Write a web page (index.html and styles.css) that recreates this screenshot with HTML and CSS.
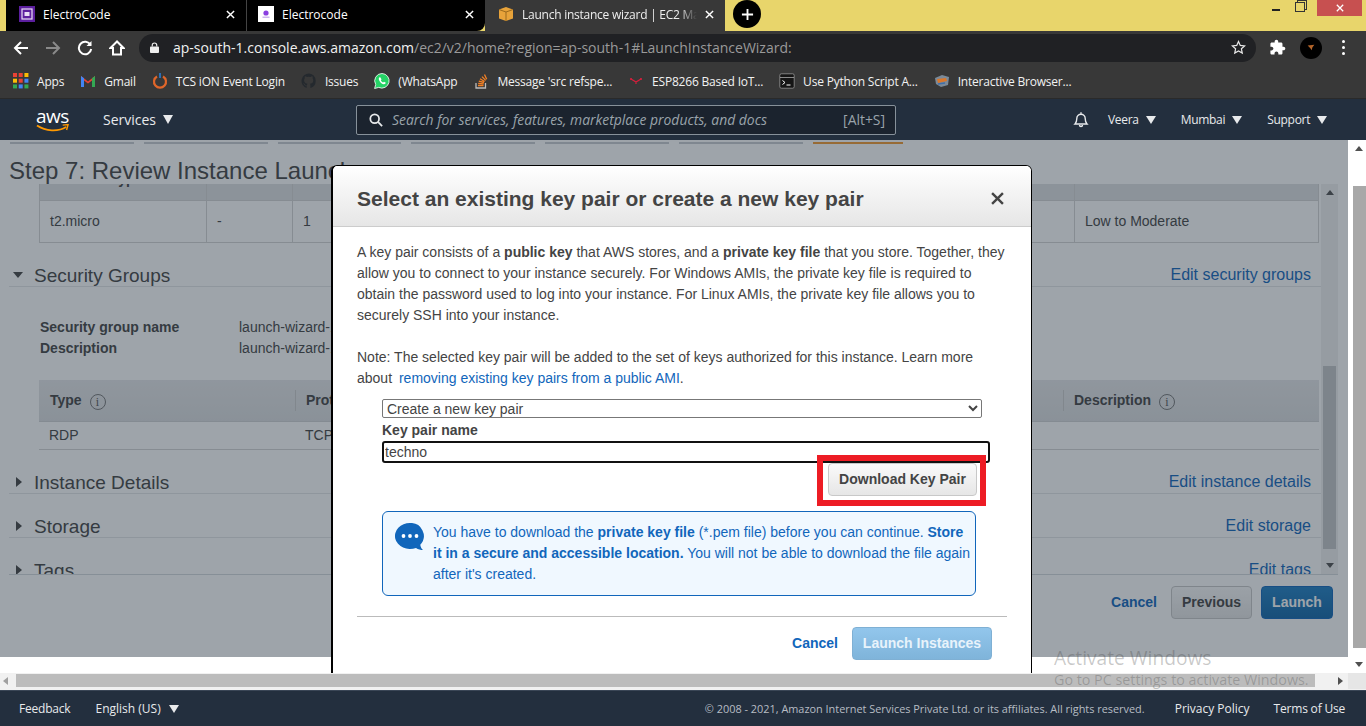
FILE: index.html
```html
<!DOCTYPE html>
<html lang="en">

<head>
  <meta charset="UTF-8">
  <meta name="viewport" content="width=device-width, initial-scale=1.0">
  <title>Launch instance wizard | EC2 Management Console</title>
  <link rel="stylesheet" href="styles.css">
</head>

<body>
  <!-- browser chrome -->
  <div class="tabstrip">
    <div class="tab">
      <svg class="favicon" viewBox="0 0 16 16"><rect width="16" height="16" fill="#5c1f9e"/><rect x="3" y="3" width="10" height="10" fill="none" stroke="#e8dcf5" stroke-width="1.2"/><rect x="5.5" y="6" width="5" height="4" fill="#e8dcf5"/></svg>
      <span class="tab-title">ElectroCode</span>
      <svg class="tab-close" viewBox="0 0 10 10"><path d="M1 1l8 8M9 1l-8 8"/></svg>
    </div>
    <div class="tab tab-second">
      <svg class="favicon" viewBox="0 0 16 16"><rect width="16" height="16" fill="#fff"/><circle cx="8" cy="7" r="2.6" fill="#8a3fe0"/><rect x="4.5" y="10.5" width="7" height="1.5" fill="#cdb5ee"/></svg>
      <span class="tab-title">Electrocode</span>
      <svg class="tab-close" viewBox="0 0 10 10"><path d="M1 1l8 8M9 1l-8 8"/></svg>
    </div>
    <div class="tab tab-active">
      <svg class="favicon" viewBox="0 0 16 16"><path d="M1 3.5L8 1l7 2.5v9L8 15l-7-2.5z" fill="#e8a33a"/><path d="M1 3.5L8 6l7-2.5M8 6v9" fill="none" stroke="#9c6a1c" stroke-width="1"/></svg>
      <span class="tab-title tab-fade">Launch instance wizard | EC2 Management Console</span>
      <svg class="tab-close" viewBox="0 0 10 10"><path d="M1 1l8 8M9 1l-8 8"/></svg>
    </div>
    <div class="newtab">
      <svg viewBox="0 0 14 14"><path d="M7 1v12M1 7h12"/></svg>
    </div>
    <div class="winbtns">
      <span class="win-min"></span>
      <span class="win-restore"></span>
      <span class="win-close"><svg viewBox="0 0 10 10"><path d="M1 1l8 8M9 1l-8 8"/></svg></span>
    </div>
  </div>

  <div class="toolbar">
    <svg class="tool tool-first" viewBox="0 0 16 16"><path d="M15 8H2M8 2L2 8l6 6"/></svg>
    <svg class="tool tool-off" viewBox="0 0 16 16"><path d="M1 8h13M8 2l6 6-6 6"/></svg>
    <svg class="tool" viewBox="0 0 16 16"><path d="M13.5 5A6.2 6.2 0 1 0 14.2 9"/><path class="tool-solid" d="M14.5 1v5h-5z"/></svg>
    <svg class="tool" viewBox="0 0 16 16"><path d="M8 1.5L1.5 8H4v6.5h8V8h2.5z"/></svg>
    <div class="omnibox">
      <svg class="lock" viewBox="0 0 10 12"><rect y="5" width="10" height="7" rx="1"/><path d="M2.5 5V3.5a2.5 2.5 0 0 1 5 0V5" fill="none" stroke="#eee" stroke-width="1.3"/></svg>
      <span class="url"><span class="url-host">ap-south-1.console.aws.amazon.com</span>/ec2/v2/home?region=ap-south-1#LaunchInstanceWizard:</span>
      <svg class="star" viewBox="0 0 16 16"><path d="M8 1.6l1.9 4.2 4.6.5-3.4 3.1.9 4.5L8 11.6l-4 2.3.9-4.5L1.500 6.300l4.600-.5z"/></svg>
    </div>
    <svg class="puzzle" viewBox="0 0 24 24"><path d="M20.500 11H19V7c0-1.100-.9-2-2-2h-4V3.500C13 2.120 11.880 1 10.500 1S8 2.120 8 3.500V5H4c-1.100 0-1.990.9-1.990 2v3.800H3.500c1.490 0 2.700 1.210 2.700 2.700s-1.210 2.700-2.700 2.700H2V20c0 1.100.9 2 2 2h3.800v-1.500c0-1.490 1.210-2.700 2.700-2.700 1.490 0 2.700 1.210 2.700 2.700V22H17c1.100 0 2-.9 2-2v-4h1.500c1.380 0 2.500-1.120 2.500-2.500S21.880 11 20.500 11z"/></svg>
    <div class="avatar"><svg viewBox="0 0 12 10"><path d="M1 2l10-1-3 4-1 4-2-3z" fill="#b5652a"/></svg></div>
    <div class="kebab"><span></span><span></span><span></span></div>
  </div>

  <div class="bookmarks">
    <a class="bm">
      <svg class="bm-icon" viewBox="0 0 14 14"><g fill="#ea4335"><rect width="3.500" height="3.500"/><rect x="5" width="3.500" height="3.500"/></g><rect x="10" width="3.500" height="3.500" fill="#fbbc05"/><g fill="#fbbc05"><rect y="5" width="3.500" height="3.500"/></g><rect x="5" y="5" width="3.500" height="3.500" fill="#ea4335"/><rect x="10" y="5" width="3.500" height="3.500" fill="#4285f4"/><rect y="10" width="3.500" height="3.500" fill="#34a853"/><rect x="5" y="10" width="3.500" height="3.500" fill="#4285f4"/><rect x="10" y="10" width="3.500" height="3.500" fill="#34a853"/></svg>
      Apps
    </a>
    <a class="bm">
      <svg class="bm-icon" viewBox="0 0 16 16"><path d="M1 3l7 5.500L15 3v11h-3V7.500L8 10.500 4 7.500V14H1z" fill="#ea4335"/><path d="M1 14V3l3 2.300V14z" fill="#4285f4"/><path d="M15 14V3l-3 2.300V14z" fill="#34a853"/></svg>
      Gmail
    </a>
    <a class="bm">
      <svg class="bm-icon" viewBox="0 0 16 16"><path d="M5 3.500a6 6 0 1 0 6 0" fill="none" stroke="#e0662a" stroke-width="2.200"/><path d="M8 0v5" stroke="#2a6fb5" stroke-width="2"/></svg>
      TCS iON Event Login
    </a>
    <a class="bm">
      <svg class="bm-icon" viewBox="0 0 16 16"><path d="M8 .5a7.500 7.500 0 0 0-2.400 14.600v-2.500c-2 .4-2.500-1-2.500-1-.4-1-.9-1.200-.9-1.200 1-.3 1.500.9 1.500.9.700 1.100 1.800.9 2.300.6 0-.5.300-.9.500-1.100-1.700-.2-3.400-.9-3.400-3.600 0-.8.300-1.500.7-2-.1-.2-.3-1 .1-2 0 0 .6-.2 2 .7a7 7 0 0 1 3.600 0c1.400-.9 2-.7 2-.7.400 1 .2 1.800.1 2 .5.500.7 1.200.7 2 0 2.700-1.700 3.400-3.400 3.600.3.200.5.700.5 1.400v2.900A7.500 7.500 0 0 0 8 .5z" fill="#24292e"/></svg>
      Issues
    </a>
    <a class="bm">
      <svg class="bm-icon" viewBox="0 0 16 16"><path d="M8 .5a7.300 7.300 0 0 0-6.300 11L.6 15.500l4.100-1.100A7.300 7.300 0 1 0 8 .5z" fill="#25d366" stroke="#fff" stroke-width=".8"/><path d="M5.500 4.200c-.9.700-1 2 0 3.700 1 1.700 2.600 3 4.300 3.300 1 .1 1.800-.5 2-1.400l-1.800-1-.8.800c-1-.4-1.900-1.300-2.400-2.400l.7-.8-1-2z" fill="#fff"/></svg>
      (WhatsApp
    </a>
    <a class="bm">
      <svg class="bm-icon" viewBox="0 0 16 16"><path d="M3 10v5h9.500v-5" fill="none" stroke="#bcbbbb" stroke-width="1.300"/><path d="M5 12.500h5.500M5.200 10.400l5.400.5M5.800 8.100l5.200 1.400M7 5.800l4.600 2.700M9 3.600l3.700 3.800M11.500 1.500l2.200 4.800" fill="none" stroke="#f48024" stroke-width="1.300"/></svg>
      Message 'src refspe...
    </a>
    <a class="bm">
      <svg class="bm-icon" viewBox="0 0 16 16"><path d="M3 6l5 3 5-3M8 9v2" fill="none" stroke="#d81f3c" stroke-width="1.200"/><circle cx="3" cy="6" r="1.100" fill="#d81f3c"/><circle cx="13" cy="6" r="1.100" fill="#d81f3c"/></svg>
      ESP8266 Based IoT...
    </a>
    <a class="bm">
      <svg class="bm-icon" viewBox="0 0 16 16"><rect x=".8" y=".8" width="14.400" height="14.400" rx="1.500" fill="#151515" stroke="#bbb" stroke-width=".6"/><path d="M1 4.500h14" stroke="#bbb" stroke-width=".7"/><path d="M3.500 7.500l2.500 2-2.500 2M7.500 12h4" fill="none" stroke="#fff" stroke-width="1"/></svg>
      Use Python Script A...
    </a>
    <a class="bm">
      <svg class="bm-icon" viewBox="0 0 16 16"><path d="M1 5l7-3 7 2-1 8-7 2-5-3z" fill="#7b8a99"/><path d="M3 6l9-1 1 3-9 2z" fill="#d9772b"/><path d="M4 11l7-1" stroke="#3f6ea8" stroke-width="1.300"/></svg>
      Interactive Browser...
    </a>
  </div>

  <!-- console top nav -->
  <nav class="awsnav">
    <div class="awslogo">
      <span>aws</span>
      <svg viewBox="0 0 34 9"><path d="M1 1.500c9 6 22 6.500 30 1.500" fill="none" stroke="#f90" stroke-width="1.800"/><path d="M27.500 1l5.500-.5-1.500 5.500" fill="none" stroke="#f90" stroke-width="1.500"/></svg>
    </div>
    <a class="navitem nav-services">Services <i class="caret caret-big"></i></a>
    <div class="searchbox">
      <svg viewBox="0 0 16 16"><circle cx="6.500" cy="6.500" r="5"/><path d="M10.500 10.500L15 15"/></svg>
      <span class="search-hint">Search for services, features, marketplace products, and docs</span>
      <span class="search-key">[Alt+S]</span>
    </div>
    <div class="nav-right">
      <svg class="bell" viewBox="0 0 16 16"><path d="M2 12.500c1.500-1.500 1.800-3 1.800-5.500a4.200 4.200 0 0 1 8.400 0c0 2.500.3 4 1.800 5.500zM8 .8v2M6.500 13.500a1.500 1.500 0 0 0 3 0"/></svg>
      <a class="navitem">Veera <i class="caret"></i></a>
      <a class="navitem">Mumbai <i class="caret"></i></a>
      <a class="navitem">Support <i class="caret"></i></a>
    </div>
  </nav>

  <div class="viewport">
    <div class="console">
      <div class="wizard-tabs">
        <span></span><span></span><span></span><span></span><span></span><span></span><span class="wizard-current"></span>
      </div>
      <h1 class="step-title">Step 7: Review Instance Launch</h1>

      <div class="review">
        <div class="review-scroll">
          <div class="spec-table">
            <div class="spec-row spec-head">
              <div>Instance Type</div><div>ECUs</div><div>vCPUs</div><div>Network Performance</div>
            </div>
            <div class="spec-row">
              <div>t2.micro</div><div>-</div><div>1</div><div>Low to Moderate</div>
            </div>
          </div>

          <div class="section-head">
            <span class="arrow-down"></span><h2>Security Groups</h2><a class="edit-link">Edit security groups</a>
          </div>
          <dl class="group-info">
            <dt>Security group name</dt><dd>launch-wizard-1</dd>
            <dt>Description</dt><dd>launch-wizard-1 created 2021-01-01</dd>
          </dl>
          <div class="rules">
            <div class="rules-row rules-head">
              <div>Type <i class="info">i</i></div><div class="rules-sep">Protocol <i class="info">i</i></div><div class="rules-sep">Description <i class="info">i</i></div>
            </div>
            <div class="rules-row">
              <div>RDP</div><div>TCP</div><div></div>
            </div>
          </div>

          <div class="section-head">
            <span class="arrow-right"></span><h2>Instance Details</h2><a class="edit-link">Edit instance details</a>
          </div>
          <div class="section-head">
            <span class="arrow-right"></span><h2>Storage</h2><a class="edit-link">Edit storage</a>
          </div>
          <div class="section-head">
            <span class="arrow-right"></span><h2>Tags</h2><a class="edit-link">Edit tags</a>
          </div>
        </div>
        <div class="inner-bar">
          <span class="bar-up"></span>
          <span class="inner-thumb"></span>
          <span class="bar-down"></span>
        </div>
      </div>

      <div class="wizard-actions">
        <a class="btn-cancel">Cancel</a>
        <button class="btn-prev">Previous</button>
        <button class="btn-launch">Launch</button>
      </div>

      <div class="dim"></div>

      <div class="modal">
        <div class="modal-head">
          <h3>Select an existing key pair or create a new key pair</h3>
          <svg class="modal-x" viewBox="0 0 12 12"><path d="M1 1l10 10M11 1L1 11"/></svg>
        </div>
        <div class="modal-body">
          <p>A key pair consists of a <b>public key</b> that AWS stores, and a <b>private key file</b> that you store. Together, they allow you to connect to your instance securely. For Windows AMIs, the private key file is required to obtain the password used to log into your instance. For Linux AMIs, the private key file allows you to securely SSH into your instance.</p>
          <p class="note">Note: The selected key pair will be added to the set of keys authorized for this instance. Learn more about <a class="link">removing existing key pairs from a public AMI</a>.</p>

          <div class="keyform">
            <select class="key-select"><option>Create a new key pair</option></select>
            <label class="key-label">Key pair name</label>
            <input class="key-input" type="text" value="techno">
            <div class="key-actions">
              <div class="download-wrap">
                <button class="btn-download">Download Key Pair</button>
                <span class="annotation"></span>
              </div>
            </div>
            <div class="infobox">
              <svg class="info-bubble" viewBox="0 0 30 27"><path d="M15 0a15 13 0 1 0 6 24.900c2 1.300 5 2.100 7 2.100-1.500-1-2.500-3-2.700-5.200A13 13 0 0 0 15 0z" fill="#1166bb"/><circle cx="8.500" cy="13" r="1.900" fill="#fff"/><circle cx="15" cy="13" r="1.900" fill="#fff"/><circle cx="21.500" cy="13" r="1.900" fill="#fff"/></svg>
              <p>You have to download the <b>private key file</b> (*.pem file) before you can continue. <b>Store it in a secure and accessible location.</b> You will not be able to download the file again after it's created.</p>
            </div>
          </div>

          <div class="modal-foot">
            <a class="foot-cancel">Cancel</a>
            <button class="btn-instances">Launch Instances</button>
          </div>
        </div>
      </div>
    </div>

    <div class="page-bar">
      <span class="bar-up"></span>
      <span class="page-thumb"></span>
      <span class="bar-down"></span>
    </div>
  </div>

  <div class="hbar">
    <span class="bar-left"></span>
    <span class="hthumb"></span>
    <span class="bar-right"></span>
    <span class="hcorner"></span>
  </div>

  <footer class="footer">
    <a class="foot-feedback">Feedback</a>
    <a class="foot-lang">English (US) <i class="caret"></i></a>
    <span class="foot-copy">© 2008 - 2021, Amazon Internet Services Private Ltd. or its affiliates. All rights reserved.</span>
    <a class="foot-privacy">Privacy Policy</a>
    <a class="foot-terms">Terms of Use</a>
  </footer>

  <div class="watermark">
    <div class="wm-big">Activate Windows</div>
    <div class="wm-small">Go to PC settings to activate Windows.</div>
  </div>
</body>

</html>
```

FILE: styles.css
```css
* {
  box-sizing: border-box;
}

body {
  font-family: 'Liberation Sans', Arial, sans-serif;
  margin: 0;
  height: 100vh;
  overflow: hidden;
  display: flex;
  flex-direction: column;
  background: #fff;
}

/* browser chrome */
.tabstrip {
  height: 31px;
  display: flex;
  background: #e8d56b;
  padding-left: 6px;
  font-family: 'Open Sans', sans-serif;
  font-size: 12px;
  color: #fff;
}

.tab {
  width: 240px;
  display: flex;
  align-items: center;
  gap: 8px;
  padding: 0 11px 3px 13px;
  background: #000;
}

.tab-second {
  width: 239px;
  border-left: 1px solid #444;
  border-bottom-right-radius: 8px;
  padding-left: 11px;
}

.tab-active {
  background: #383838;
  color: #eee;
}

.tab-title {
  flex: 1;
  white-space: nowrap;
  overflow: hidden;
}

.tab-fade {
  letter-spacing: -0.25px;
  -webkit-mask-image: linear-gradient(to right, #000 90%, transparent);
  mask-image: linear-gradient(to right, #000 90%, transparent);
}

.favicon {
  width: 16px;
  height: 16px;
  flex: none;
}

.tab-close {
  width: 9px;
  height: 9px;
  flex: none;
  stroke: #fff;
  stroke-width: 1.6;
  fill: none;
}

.newtab {
  width: 28px;
  height: 28px;
  border-radius: 50%;
  background: #000;
  margin: 0 0 0 8px;
  display: flex;
  align-items: center;
  justify-content: center;
}

.newtab svg {
  width: 13px;
  height: 13px;
  stroke: #fff;
  stroke-width: 2;
}

.winbtns {
  margin-left: auto;
  display: flex;
  align-items: flex-start;
  margin-right: 4px;
}

.win-min {
  width: 8px;
  height: 2px;
  background: #222;
  margin: 9px 15px 0 0;
}

.win-restore {
  width: 10px;
  height: 10px;
  border: 1px solid #333;
  margin: 2px 12px 0 0;
  box-shadow: 2px -2px 0 -1px #e8d56b, 2px -2px 0 0 #333;
}

.win-close {
  width: 45px;
  height: 16px;
  background: #c75050;
  display: flex;
  align-items: center;
  justify-content: center;
}

.win-close svg {
  width: 8px;
  height: 8px;
  stroke: #fff;
  stroke-width: 1.600;
}

.toolbar {
  height: 33px;
  background: #383838;
  display: flex;
  align-items: center;
  padding: 0 0 0 13px;
}

.tool {
  width: 16px;
  height: 16px;
  margin-right: 16px;
  fill: none;
  stroke: #fff;
  stroke-width: 2;
  flex: none;
}

.tool-off {
  stroke: #8a8a8a;
}

.tool-solid {
  fill: #fff;
  stroke: none;
}

.omnibox {
  width: 1117px;
  height: 28px;
  margin-left: -2px;
  border-radius: 14px;
  background: #202124;
  display: flex;
  align-items: center;
  padding: 0 10px 0 11px;
}

.lock {
  width: 9px;
  height: 11px;
  fill: #eee;
  flex: none;
  margin-right: 14px;
}

.url {
  flex: 1;
  font-family: 'Open Sans', sans-serif;
  font-size: 14px;
  color: #9a9a9a;
  white-space: nowrap;
}

.url-host {
  color: #f1f1f1;
}

.star {
  width: 15px;
  height: 15px;
  fill: none;
  stroke: #e8e8e8;
  stroke-width: 1.300;
}

.puzzle {
  width: 17px;
  height: 17px;
  fill: #fff;
  margin-left: 13px;
}

.avatar {
  width: 22px;
  height: 22px;
  border-radius: 50%;
  background: #000;
  margin-left: 14px;
  display: flex;
  align-items: center;
  justify-content: center;
}

.avatar svg {
  width: 8px;
  height: 7px;
}

.kebab {
  margin-left: 20px;
  display: flex;
  flex-direction: column;
  gap: 3px;
}

.kebab span {
  width: 3px;
  height: 3px;
  border-radius: 50%;
  background: #fff;
}

.bookmarks {
  height: 35px;
  background: #383838;
  border-bottom: 1px solid #2a2a2a;
  display: flex;
  align-items: center;
  padding-left: 5px;
  font-family: 'Open Sans', sans-serif;
  font-size: 12px;
  letter-spacing: -0.2px;
  color: #f2f2f2;
}

.bm {
  display: flex;
  align-items: center;
  gap: 8px;
  padding: 0 8px;
  white-space: nowrap;
}

.bm-icon {
  width: 16px;
  height: 16px;
  flex: none;
}

/* aws top nav */
.awsnav {
  height: 41px;
  background: #232f3e;
  display: flex;
  align-items: center;
  font-family: 'Open Sans', sans-serif;
  font-size: 12px;
  color: #e8eaec;
  padding-left: 36px;
}

.awslogo {
  width: 33px;
  height: 26px;
  position: relative;
  margin-right: 34px;
  color: #fff;
  font-size: 19px;
  line-height: 19px;
  letter-spacing: -0.5px;
}

.awslogo svg {
  position: absolute;
  left: 0;
  top: 17px;
  width: 33px;
  height: 9px;
}

.navitem {
  display: flex;
  align-items: center;
  gap: 7px;
  white-space: nowrap;
}

.nav-right .navitem {
  letter-spacing: -0.3px;
}

.caret {
  width: 0;
  height: 0;
  border-left: 5px solid transparent;
  border-right: 5px solid transparent;
  border-top: 8px solid #e8eaec;
}

.caret-big {
  border-left-width: 5.500px;
  border-right-width: 5.500px;
  border-top-width: 9px;
}

.nav-services {
  width: 253px;
  font-size: 14px;
}

.searchbox {
  width: 540px;
  height: 30px;
  border: 1px solid #87919a;
  border-radius: 2px;
  background: #1b232e;
  display: flex;
  align-items: center;
  padding: 0 10px 0 12px;
  font-size: 13.900px;
  color: #9aa3ab;
}

.searchbox svg {
  width: 14px;
  height: 14px;
  fill: none;
  stroke: #e8eaec;
  stroke-width: 2;
  flex: none;
  margin-right: 9px;
}

.search-hint {
  flex: 1;
  font-style: italic;
  white-space: nowrap;
}

.nav-right {
  display: flex;
  align-items: center;
  margin-left: 177px;
  gap: 25px;
}

.bell {
  width: 16px;
  height: 17px;
  fill: none;
  stroke: #e8eaec;
  stroke-width: 1.400;
  margin-right: -6px;
}

/* page below the nav */
.viewport {
  height: 533px;
  display: flex;
  position: relative;
  overflow: hidden;
}

.console {
  width: 1348px;
  position: relative;
  flex: none;
}

.wizard-tabs {
  height: 4px;
  display: flex;
  gap: 10px;
  padding-left: 10px;
}

.wizard-tabs span {
  height: 2px;
  margin-top: 2px;
  flex: 1;
  background: #c8ccd0;
}

.wizard-tabs .wizard-current {
  flex: none;
  width: 90px;
  margin-right: 445px;
  background: #f29a30;
}

.step-title {
  margin: 0;
  height: 40px;
  padding: 14px 0 0 9px;
  font-size: 24px;
  line-height: 26px;
  font-weight: normal;
  color: #444;
  white-space: nowrap;
}

.review {
  display: flex;
  margin-left: 9px;
  height: 391px;
}

.review-scroll {
  width: 1312px;
  overflow: hidden;
  border-bottom: 1px solid #d5d9dd;
  font-size: 14px;
  color: #444;
}

.spec-table {
  margin: -23px 0 0 30px;
  width: 1280px;
  border-left: 1px solid #d5d5d5;
  border-right: 1px solid #d5d5d5;
  border-bottom: 1px solid #d5d5d5;
}

.spec-row {
  display: grid;
  grid-template-columns: 166px 86px 782px 1fr;
  height: 41px;
}

.spec-row div {
  padding: 12px 10px 0;
  border-left: 1px solid #d5d5d5;
}

.spec-row div:first-child {
  border-left: none;
}

.spec-head {
  height: 40px;
  background: #dfe1e3;
  border-bottom: 1px solid #d5d5d5;
  font-weight: bold;
}

.spec-head div {
  padding-top: 10px;
}

.section-head {
  height: 23px;
  margin-top: 21px;
  display: flex;
  align-items: center;
  border-bottom: 1px solid #e4e6e8;
}

.section-head h2 {
  margin: 2px 0 0;
  flex: 1;
  font-size: 19px;
  line-height: 22px;
  font-weight: normal;
  color: #444;
}

.arrow-down,
.arrow-right {
  width: 25px;
  flex: none;
  position: relative;
  height: 10px;
}

.arrow-down::before {
  content: '';
  display: block;
  margin: 2px 0 0 4px;
  border-left: 5.500px solid transparent;
  border-right: 5.500px solid transparent;
  border-top: 6px solid #444;
  width: 0;
}

.arrow-right::before {
  content: '';
  display: block;
  margin-left: 7px;
  border-top: 5.500px solid transparent;
  border-bottom: 5.500px solid transparent;
  border-left: 6px solid #444;
  width: 0;
}

.edit-link {
  font-size: 16px;
  color: #1166bb;
  padding-right: 10px;
}

.group-info {
  margin: 30px 0 21px 31px;
  display: grid;
  grid-template-columns: 199px 1fr;
  line-height: 21px;
}

.group-info dt {
  font-weight: bold;
}

.group-info dd {
  margin: 0;
}

.rules {
  margin-left: 30px;
  width: 1280px;
  height: 70px;
  border-bottom: 1px solid #d5d5d5;
}

.rules-row {
  display: grid;
  grid-template-columns: 256px 768px 1fr;
  padding-top: 5px;
}

.rules-row div {
  padding-left: 10px;
}

.rules-head {
  height: 42px;
  padding-top: 10px;
  background: linear-gradient(#e6e7e9, #dcdee0);
  border-bottom: 1px solid #d0d2d4;
  font-weight: bold;
}

.rules-head div:first-child {
  padding-left: 11px;
  line-height: 20px;
}

.rules-sep {
  height: 21px;
  border-left: 1px solid #ccc;
  line-height: 20px;
}

.info {
  display: inline-block;
  width: 16px;
  height: 16px;
  margin-left: 4px;
  border: 1px solid #777;
  border-radius: 50%;
  font-size: 12px;
  line-height: 14px;
  text-align: center;
  font-family: 'Liberation Serif', serif;
  font-style: normal;
  font-weight: normal;
  color: #555;
  vertical-align: -1px;
}

.inner-bar {
  width: 17px;
  background: #f1f1f1;
  display: flex;
  flex-direction: column;
  align-items: center;
  border-bottom: 1px solid #d5d9dd;
}

.inner-thumb {
  width: 13px;
  height: 183px;
  background: #c4c6c8;
  margin-top: auto;
}

.bar-up,
.bar-down {
  width: 0;
  height: 0;
  border-left: 4px solid transparent;
  border-right: 4px solid transparent;
}

.bar-up {
  border-bottom: 5px solid #505050;
  margin-top: 6px;
}

.bar-down {
  border-top: 5px solid #505050;
  margin: 14px 0 6px;
}

.wizard-actions {
  display: flex;
  justify-content: flex-end;
  align-items: center;
  padding: 11px 15px 0 0;
}

.btn-cancel {
  font-size: 14px;
  font-weight: bold;
  color: #1166bb;
  margin: 0 14px 2px 0;
}

.wizard-actions button {
  height: 33px;
  padding-bottom: 3px;
  border-radius: 4px;
  font-family: inherit;
  font-size: 14px;
  font-weight: bold;
}

.btn-prev {
  width: 81px;
  background: linear-gradient(#fafafa, #e6e6e6);
  border: 1px solid #c8c8c8;
  color: #444;
  margin-right: 9px;
}

.btn-launch {
  width: 72px;
  background: linear-gradient(#1f7fc4, #1166a8);
  border: 1px solid #1166bb;
  color: #fff;
}

.dim {
  position: absolute;
  left: 0;
  top: 0;
  right: 0;
  height: 517px;
  background: rgba(35, 47, 62, 0.44);
}

/* key pair dialog */
.modal {
  position: absolute;
  left: 331px;
  top: 25px;
  width: 701px;
  height: 530px;
  background: #fff;
  border: 1px solid #000;
  border-left-width: 2px;
  border-radius: 6px 6px 0 0;
  color: #444;
  font-size: 14px;
  line-height: 21px;
}

.modal-head {
  height: 61px;
  border-radius: 5px 5px 0 0;
  background: linear-gradient(#fff, #e6e6e6);
  border-bottom: 1px solid #ccc;
  display: flex;
  align-items: center;
  justify-content: space-between;
  padding: 5px 27px 0 24px;
}

.modal-head h3 {
  margin: 0;
  font-size: 21px;
  font-weight: bold;
  color: #444;
}

.modal-x {
  width: 13px;
  height: 13px;
  fill: none;
  stroke: #444;
  stroke-width: 2.200;
}

.modal-body {
  padding: 15px 24px 0;
}

.modal-body p {
  margin: 0;
}

.modal-body .note {
  margin-top: 21px;
}

.link {
  color: #1166bb;
  margin-left: 3px;
}

.keyform {
  margin: 10px 0 0 25px;
  width: 608px;
}

.key-select {
  display: block;
  width: 600px;
  height: 19px;
  padding: 0;
  font-family: inherit;
  font-size: 14px;
  color: #444;
  background: #fff;
  border: 1px solid #777;
  border-radius: 2px;
}

.key-label {
  display: block;
  margin-top: 1px;
  font-weight: bold;
  line-height: 22px;
}

.key-input {
  display: block;
  width: 608px;
  height: 22px;
  padding: 0 1px;
  font-family: inherit;
  font-size: 14px;
  color: #444;
  border: 2px solid #111;
  border-radius: 3px;
  outline: none;
}

.key-actions {
  display: flex;
  justify-content: flex-end;
  padding-right: 13px;
}

.download-wrap {
  position: relative;
}

.btn-download {
  display: block;
  width: 149px;
  height: 33px;
  padding-bottom: 3px;
  background: linear-gradient(#fafafa, #e6e6e6);
  border: 1px solid #c8c8c8;
  border-radius: 4px;
  font-family: inherit;
  font-size: 14px;
  font-weight: bold;
  color: #444;
}

.annotation {
  position: absolute;
  left: -11px;
  right: -9px;
  top: -8px;
  bottom: -10px;
  border: 6px solid #ed1c24;
}

.infobox {
  margin-top: 15px;
  width: 594px;
  height: 85px;
  display: flex;
  gap: 8px;
  padding: 10px 4px 0 12px;
  background: #f0f8ff;
  border: 1px solid #1166bb;
  border-radius: 6px;
  color: #1166bb;
}

.info-bubble {
  width: 30px;
  height: 27px;
  flex: none;
  margin-top: 1px;
}

.modal-foot {
  margin-top: 20px;
  border-top: 1px solid #bbb;
  padding: 10px 15px 0 0;
  display: flex;
  justify-content: flex-end;
  align-items: center;
}

.foot-cancel {
  font-weight: bold;
  color: #1166bb;
  margin-right: 14px;
}

.btn-instances {
  width: 140px;
  height: 33px;
  padding-bottom: 3px;
  border: 1px solid #7fb0d4;
  border-radius: 4px;
  background: linear-gradient(#92c6ec, #7fb4da);
  font-family: inherit;
  font-size: 14px;
  font-weight: bold;
  color: #e8f3fb;
}

/* window scrollbars */
.page-bar {
  width: 18px;
  flex: none;
  background: #fff;
  display: flex;
  flex-direction: column;
  align-items: center;
  padding-left: 4px;
}

.page-thumb {
  width: 13px;
  height: 462px;
  margin-top: auto;
  background: #a8a8a8;
}

.hbar {
  height: 17px;
  display: flex;
  align-items: center;
  background: #f1f1f1;
  border-bottom: 2px solid #f1f1f1;
}

.hthumb {
  width: 1299px;
  height: 13px;
  margin-left: 8px;
  background: #bcbcbc;
}

.bar-left,
.bar-right {
  width: 0;
  height: 0;
  border-top: 4px solid transparent;
  border-bottom: 4px solid transparent;
}

.bar-left {
  border-right: 5px solid #a0a0a0;
  margin-left: 3px;
}

.bar-right {
  border-left: 5px solid #505050;
  margin-left: 23px;
}

.hcorner {
  margin-left: auto;
  width: 18px;
  height: 17px;
  background: #e6e6e6;
}

.watermark {
  position: absolute;
  left: 1054px;
  top: 645px;
  font-family: 'Open Sans', sans-serif;
  color: rgba(60, 60, 60, 0.28);
  white-space: nowrap;
  pointer-events: none;
}

.wm-big {
  font-size: 19.200px;
  line-height: 26px;
}

.wm-small {
  font-size: 14.300px;
  line-height: 20px;
  margin-top: -1px;
}

/* console footer */
.footer {
  flex: 1;
  background: #232f3e;
  border-top: 1px solid #3a4656;
  display: flex;
  align-items: center;
  padding-left: 19px;
  font-family: 'Open Sans', sans-serif;
  font-size: 12px;
  color: #e8eaec;
  white-space: nowrap;
}

.foot-feedback {
  letter-spacing: -0.2px;
}

.foot-lang {
  margin-left: 25px;
  display: flex;
  align-items: center;
  gap: 8px;
}

.foot-copy {
  margin-left: auto;
  font-size: 10.900px;
  color: #b7bdc4;
}

.foot-privacy {
  margin-left: 30px;
}

.foot-terms {
  margin-left: 24px;
  margin-right: 21px;
  letter-spacing: -0.2px;
}
```
